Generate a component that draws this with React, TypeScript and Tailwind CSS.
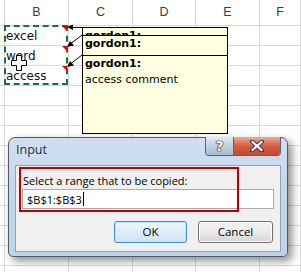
// Excel sheet with three cell comments and the "Input" range picker dialog on top.
const cols = ['', 'B', 'C', 'D', 'E', 'F'];
const cells: Record<number, string> = { 1: 'excel', 2: 'word', 3: 'access' };
const rows = Array.from({ length: 13 }, (_, i) => i + 1);

// comment boxes stack; the lower ones are mostly hidden, so they are clipped
function Comment({ box, title, body, titleBox = '' }: { box: string; title: string; body?: string; titleBox?: string }) {
  return (
    <div
      className={`absolute left-[82px] ${box} w-[146px] overflow-hidden border border-black bg-[#ffffe1] px-[2px] font-['DejaVu_Sans',sans-serif] text-[11px] leading-[16px] text-black`}
    >
      <div className={`overflow-hidden font-bold ${titleBox}`}>{title}</div>
      {body && <div>{body}</div>}
    </div>
  );
}

function Arrows() {
  return (
    <svg className="absolute left-0 top-0" width="100" height="80" viewBox="0 0 100 80">
      {/* red comment markers */}
      <polygon points="62,26 67,26 67,31" fill="#e00000" />
      <polygon points="62,46 67,46 67,51" fill="#e00000" />
      <polygon points="62,66 67,66 67,71" fill="#e00000" />
      {/* arrows from comment to cell */}
      <line x1="70" y1="27.5" x2="83" y2="27.5" stroke="black" strokeWidth="1" />
      <polygon points="67,27 73,24.5 73,30" fill="black" />
      <line x1="71" y1="43.5" x2="82" y2="35" stroke="black" strokeWidth="1" />
      <polygon points="67,47 70,41 74,45.5" fill="black" />
      <line x1="71" y1="63.5" x2="82" y2="55" stroke="black" strokeWidth="1" />
      <polygon points="67,67 70,61 74,65.5" fill="black" />
    </svg>
  );
}

function Cursor() {
  return (
    <svg className="absolute left-[11px] top-[55px]" width="16" height="16" viewBox="0 0 16 16">
      <path d="M5.5 0.5h5v5h5v5h-5v5h-5v-5h-5v-5h5z" fill="white" stroke="black" strokeWidth="1" />
    </svg>
  );
}

function CloseGlyph() {
  return (
    <svg width="14" height="12" viewBox="0 0 14 12">
      <path d="M2 1.5L12 10.5M12 1.5L2 10.5" stroke="#3d3d3d" strokeWidth="4.2" strokeLinecap="square" />
      <path d="M2.5 2L11.5 10M11.5 2L2.5 10" stroke="white" strokeWidth="2.2" strokeLinecap="square" />
    </svg>
  );
}

function Dialog() {
  return (
    <div className="absolute left-[8px] top-[137px] flex h-[120px] w-[280px] flex-col rounded-t-[7px] rounded-b-[5px] border border-[#4d5b6b] bg-gradient-to-b from-[#cfdff1] via-[#c4d6eb] to-[#bfd2e8] shadow-[4px_4px_9px_rgba(0,0,0,0.45)]">
      <div className="flex h-[27px] items-start">
        <span className="ml-[7px] mt-[4px] font-['Open_Sans',sans-serif] text-[12.5px] leading-[16px] text-[#1b2a3c] [text-shadow:0_0_8px_#eef4fb]">
          Input
        </span>
        <div className="ml-auto mr-[6px] mt-[-1px] flex h-[19px] overflow-hidden rounded-b-[4px] border border-t-0 border-[#53647a]">
          <div className="flex w-[28px] items-center justify-center border-r border-[#53647a] bg-gradient-to-b from-[#e2eaf4] via-[#c3d1e2] to-[#a9bbd0] font-['DejaVu_Sans',sans-serif] text-[14px] font-bold leading-none text-[#f4f4f4] [text-shadow:0_0_1px_#2e2e2e,0_0_1px_#2e2e2e,0_0_1px_#2e2e2e,0_0_1px_#2e2e2e]">
            ?
          </div>
          <div className="flex w-[46px] items-center justify-center bg-gradient-to-b from-[#ecaa9c] via-[#d65c43] to-[#c5472f]">
            <CloseGlyph />
          </div>
        </div>
      </div>
      <div className="relative mx-[6px] mb-[4px] flex-1 border border-[#8fa3bb] bg-[#f0f0f0] px-[6px] pt-[7px] font-['Open_Sans',sans-serif] text-[11px] text-black">
        <div className="pl-[1px] leading-[16px]">Select a range that to be copied:</div>
        <div className="flex h-[20px] items-center border border-[#abadb3] bg-white pl-[4px] leading-none">
          $B$1:$B$3
          <span className="ml-[1px] h-[14px] w-px bg-black" />
        </div>
        <div className="mt-[12px] flex justify-end gap-[11px] pr-[1px] text-[11.5px]">
          <button className="h-[22px] w-[73px] rounded-[3px] border border-[#3c8fd0] bg-gradient-to-b from-[#eef6fc] to-[#cfe4f3] leading-none shadow-[inset_0_0_0_1px_#bfe3fb]">
            OK
          </button>
          <button className="h-[22px] w-[75px] rounded-[3px] border border-[#707070] bg-gradient-to-b from-[#f2f2f2] via-[#ebebeb] to-[#d4d4d4] leading-none shadow-[inset_0_0_0_1px_#fcfcfc]">
            Cancel
          </button>
        </div>
        <div className="absolute left-[3px] top-[1px] h-[45px] w-[220px] border-2 border-[#c00000]" />
      </div>
    </div>
  );
}

export default function App() {
  return (
    <div className="relative h-[272px] w-[301px] overflow-hidden bg-white">
      <div className="grid grid-cols-[5px_64px_64px_63px_64px_1fr]">
        {cols.map((c, i) => (
          <div
            key={'h' + i}
            className="flex h-[26px] items-center justify-center border-b border-r border-[#d4d4d4] font-['Liberation_Sans',sans-serif] text-[12.5px] text-[#3c3c3c]"
          >
            {c}
          </div>
        ))}
        {rows.map((r) =>
          cols.map((_, i) => (
            <div
              key={r + '-' + i}
              className="flex h-[20px] items-center overflow-hidden whitespace-nowrap border-b border-r border-[#d9d9d9] pl-[1px] font-['DejaVu_Sans',sans-serif] text-[12px] text-[#111]"
            >
              {i === 1 ? cells[r] : null}
            </div>
          ))
        )}
      </div>

      <div className="absolute left-[4px] top-[25px] h-[60px] w-[64px] border-2 border-dashed border-[#1e6e42]" />
      <Comment box="top-[27px] h-[9px] border-b-0" titleBox="h-[8px]" title="gordon1:" />
      <Comment box="top-[35px] h-[21px] border-b-0" title="gordon1:" />
      <Comment box="top-[55px] h-[79px]" title="gordon1:" body="access comment" />
      <Arrows />
      <Cursor />
      <Dialog />
    </div>
  );
}
